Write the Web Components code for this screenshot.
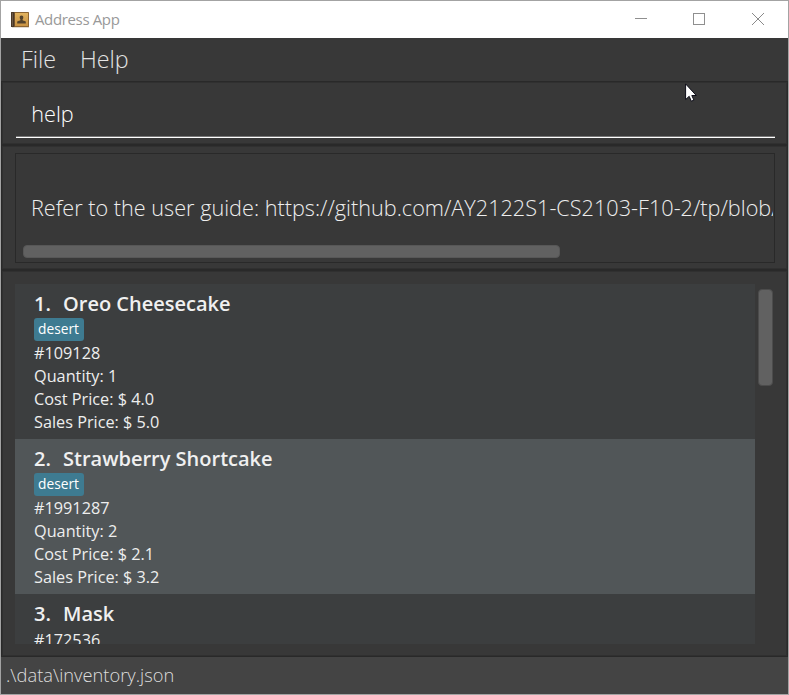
<!DOCTYPE html>
<html lang="en">
<head>
<meta charset="utf-8">
<title>Address App</title>
<style>
html,body{margin:0;width:789px;height:695px;overflow:hidden;background:#a3a3a3}
body{font-family:"Open Sans","Noto Sans",sans-serif}
</style>
</head>
<body>
<app-window></app-window>
<script>
const define=(name,html)=>{
  customElements.define(name,class extends HTMLElement{
    constructor(){
      super();
      const t=document.createElement('template');
      t.innerHTML=html;
      this.attachShadow({mode:'open'}).append(t.content.cloneNode(true));
    }
  });
};

define('title-bar',`<style>
:host{display:flex;align-items:center;height:37px;background:#fff;color:#999;font-size:15px;box-sizing:border-box;padding-left:10px}
.icon{display:block;margin-right:6px}
.name{flex:1;line-height:37px;letter-spacing:-.36px}
.controls{display:block}
</style>
<svg class="icon" width="18" height="18" viewBox="0 0 18 18">
<defs><linearGradient id="g" x1="0" y1="0" x2="0" y2="1"><stop offset="0" stop-color="#e2b35f"/><stop offset="1" stop-color="#c99343"/></linearGradient></defs>
<rect x="1" y="16" width="17" height="1" fill="#e1d9cf"/>
<rect x="0" y="1" width="18" height="15" rx=".6" fill="#8d6532"/>
<rect x="0" y="1" width="3.4" height="15" rx=".6" fill="#493828"/>
<rect x="1" y="2" width="1" height="13" fill="#6d5946"/>
<rect x="4" y="2" width="13" height="13" fill="url(#g)"/>
<path d="M10.5 4.6c1.3 0 1.9.9 1.8 2.1-.1 1.1-.8 1.5-.8 2.3 0 .9 2.9.9 3.3 1.6V12.4H6.2v-1.8c.4-.7 3.3-.7 3.3-1.6 0-.8-.7-1.2-.8-2.3-.1-1.2.5-2.1 1.8-2.1z" fill="#54432c"/></svg>
<span class="name"><slot></slot></span>
<svg class="controls" width="154" height="37" viewBox="634 1 154 37" fill="none" stroke="#8f8f8f" shape-rendering="crispEdges"><path d="M635 18.5h12M693.5 13.5h11v11h-11z"/><path d="M752 13l12 12M764 13l-12 12" stroke="#8a8a8a" shape-rendering="auto"/></svg>`);

define('menu-bar',`<style>
:host{display:flex;gap:24px;height:43px;padding-left:20px;background:#383838;color:#e4e4e4;font-size:23.3px;font-weight:300;line-height:43px;box-sizing:border-box}
</style><slot></slot>`);

define('menu-item',`<style>:host{display:block}</style><slot></slot>`);

define('split-pane',`<style>
:host{display:block;box-sizing:border-box;border:1px solid #292929;box-shadow:inset 0 0 0 1px #303030;background:#383838}
</style><slot></slot>`);

define('command-box',`<style>
:host{display:block;margin:15px 12px 0 14px;height:41px;box-sizing:border-box;padding-left:15.3px;border-bottom:1px solid #fff;box-shadow:inset 0 -1px 0 #777;color:#fff;font-size:21.67px;font-weight:300;line-height:34px}
</style><slot></slot>`);

define('result-display',`<style>
:host{display:flex;flex-direction:column;margin:7px 12px 0 13px;height:110px;box-sizing:border-box;border:1px solid #292929;color:#eee;font-size:21.67px;font-weight:300}
.text{margin:37px 1px 0 0;padding-left:15px;height:34px;line-height:34px;white-space:nowrap;overflow:hidden}
.thumb{margin:20px 0 0 7px;width:537px;height:13px;border-radius:4px;background:#616161;box-sizing:border-box;border:1px solid #575757}
</style><div class="text"><slot></slot></div><div class="thumb"></div>`);

define('item-list',`<style>
:host{display:flex;height:360px;margin:13px 12px 0 13px;overflow:hidden}
.cells{width:740px;height:360px;overflow:hidden;background:#3c3e3f}
.thumb{margin:5px 0 0 3px;width:15px;height:97px;border-radius:4px;background:#616161;box-sizing:border-box;border:1px solid #4c4c4c}
</style><div class="cells"><slot></slot></div><div class="thumb"></div>`);

define('item-card',`<style>
:host{display:flex;flex-direction:column;align-items:flex-start;height:155px;box-sizing:border-box;padding:6px 0 0 19px;background:#3c3e3f;color:#eee;font-size:16.25px;line-height:23px}
:host([alt]){background:#515658}
.head{display:flex;height:28px;line-height:28px;font-size:20px;font-weight:600;color:#f0f0f0}
.id{width:29px}
.tags{display:flex;min-height:1px}
::slotted(item-tag){margin-bottom:1px}
</style><div class="head"><span class="id"><slot name="index"></slot></span><slot name="name"></slot></div><div class="tags"><slot name="tags"></slot></div><slot></slot>`);

define('item-tag',`<style>
:host{display:block;width:50px;height:23px;box-sizing:border-box;padding-left:4px;border-radius:3px;background:#3e7b91;color:#fff;font-size:13.75px;line-height:22px}
</style><slot></slot>`);

define('item-field',`<style>:host{display:block;height:23px;white-space:nowrap}</style><slot></slot>`);

define('status-bar',`<style>
:host{display:block;height:37px;padding-left:5px;background:#444;color:#ddd;font-size:18.3px;font-weight:300;line-height:35px;box-sizing:border-box}
</style><slot></slot>`);

define('mouse-pointer',`<style>:host{position:absolute;left:685px;top:83px;width:12px;height:19px}svg{display:block}</style>
<svg width="12" height="19" viewBox="0 0 12 19"><path d="M.6.9v15.6l3.6-3.2 2.1 4.9 2.6-1.1-2.1-4.6h4.5z" fill="#fff" stroke="#0d0d18" stroke-width="1"/></svg>`);

define('app-window',`<style>
:host{display:block;padding:1px;width:787px;height:693px;}
.pane1{height:64px}.pane2{height:125px}.pane3{height:387px}
</style>
<title-bar>Address App</title-bar>
<menu-bar><menu-item>File</menu-item><menu-item>Help</menu-item></menu-bar>
<split-pane class="pane1"><command-box>help</command-box></split-pane>
<split-pane class="pane2"><result-display>Refer to the user guide: https://github.com/AY2122S1-CS2103-F10-2/tp/blob/</result-display></split-pane>
<split-pane class="pane3"><item-list>
<item-card><span slot="index">1.</span><span slot="name">Oreo Cheesecake</span><item-tag slot="tags">desert</item-tag><item-field>#109128</item-field><item-field>Quantity: 1</item-field><item-field>Cost Price: $ 4.0</item-field><item-field>Sales Price: $ 5.0</item-field></item-card>
<item-card alt><span slot="index">2.</span><span slot="name">Strawberry Shortcake</span><item-tag slot="tags">desert</item-tag><item-field>#1991287</item-field><item-field>Quantity: 2</item-field><item-field>Cost Price: $ 2.1</item-field><item-field>Sales Price: $ 3.2</item-field></item-card>
<item-card><span slot="index">3.</span><span slot="name">Mask</span><item-field>#172536</item-field></item-card>
</item-list></split-pane>
<status-bar>.\\data\\inventory.json</status-bar>
<mouse-pointer></mouse-pointer>`);
</script>
</body>
</html>
